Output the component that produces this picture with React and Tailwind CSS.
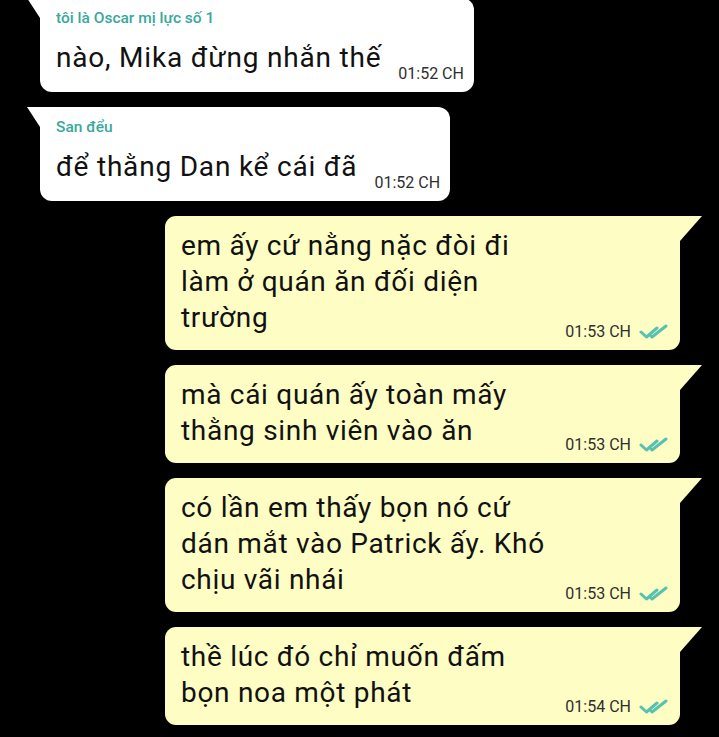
const incoming = [
  { name: "tôi là Oscar mị lực số 1", text: "nào, Mika đừng nhắn thế", time: "01:52 CH" },
  { name: "San đểu", text: "để thằng Dan kể cái đã", time: "01:52 CH" },
];

const outgoing = [
  { lines: ["em ấy cứ nằng nặc đòi đi", "làm ở quán ăn đối diện", "trường"], time: "01:53 CH" },
  { lines: ["mà cái quán ấy toàn mấy", "thằng sinh viên vào ăn"], time: "01:53 CH" },
  { lines: ["có lần em thấy bọn nó cứ", "dán mắt vào Patrick ấy. Khó", "chịu vãi nhái"], time: "01:53 CH" },
  { lines: ["thề lúc đó chỉ muốn đấm", "bọn noa một phát"], time: "01:54 CH" },
];

function DoubleTick() {
  return (
    <svg width="30" height="16" viewBox="0 0 30 16" fill="none" stroke="#58c2b1" strokeWidth="3" strokeLinecap="round" strokeLinejoin="round">
      <path d="M2 8 L7.5 13 L18 4" />
      <path d="M12 12 L13 13 L27 2" />
    </svg>
  );
}

function Incoming({ msg, first }) {
  return (
    <div className={`relative ml-[40px] self-start rounded-[12px] rounded-tl-none bg-white pb-[8px] pl-4 pr-[10px] pt-[10px] ${first ? "-mt-[2px]" : ""}`}>
      <svg className="absolute left-[-13px] top-0" width="13" height="20" viewBox="0 0 13 20">
        <polygon points="0,0 13,0 13,20" fill="#ffffff" />
      </svg>
      <div className="text-[15.5px] font-medium leading-[20px] text-[#3aa89b]">{msg.name}</div>
      <div className="mt-[12px] flex items-end gap-[17px]">
        <div className="pb-[8px] text-[28px] leading-[36px] tracking-[0.8px] text-[#111111]">{msg.text}</div>
        <div className="text-[16px] leading-[20px] text-[#2f2f2f]">{msg.time}</div>
      </div>
    </div>
  );
}

function Outgoing({ msg }) {
  return (
    <div className="relative ml-[165px] w-[515px] rounded-[11px] rounded-tr-none bg-[#fdfdc4] pb-[8px] pl-4 pr-[11px] pt-[12px]">
      <svg className="absolute right-[-22px] top-0" width="22" height="25" viewBox="0 0 22 25">
        <polygon points="0,0 22,0 0,25" fill="#fdfdc4" />
      </svg>
      <div className="flex items-end justify-between">
        <div className="pb-[6px] text-[28px] leading-[36px] tracking-[0.7px] text-[#111111]">
          {msg.lines.map((line) => (
            <div key={line}>{line}</div>
          ))}
        </div>
        <div className="flex items-center gap-[8px]">
          <span className="text-[16px] leading-[20px] text-[#2f2f2f]">{msg.time}</span>
          <DoubleTick />
        </div>
      </div>
    </div>
  );
}

export default function App() {
  return (
    <div className="flex h-[737px] w-[719px] flex-col gap-[15px] overflow-hidden bg-black font-['Roboto',sans-serif]">
      {incoming.map((msg, i) => (
        <Incoming key={msg.name} msg={msg} first={i === 0} />
      ))}
      {outgoing.map((msg) => (
        <Outgoing key={msg.lines[0]} msg={msg} />
      ))}
    </div>
  );
}
